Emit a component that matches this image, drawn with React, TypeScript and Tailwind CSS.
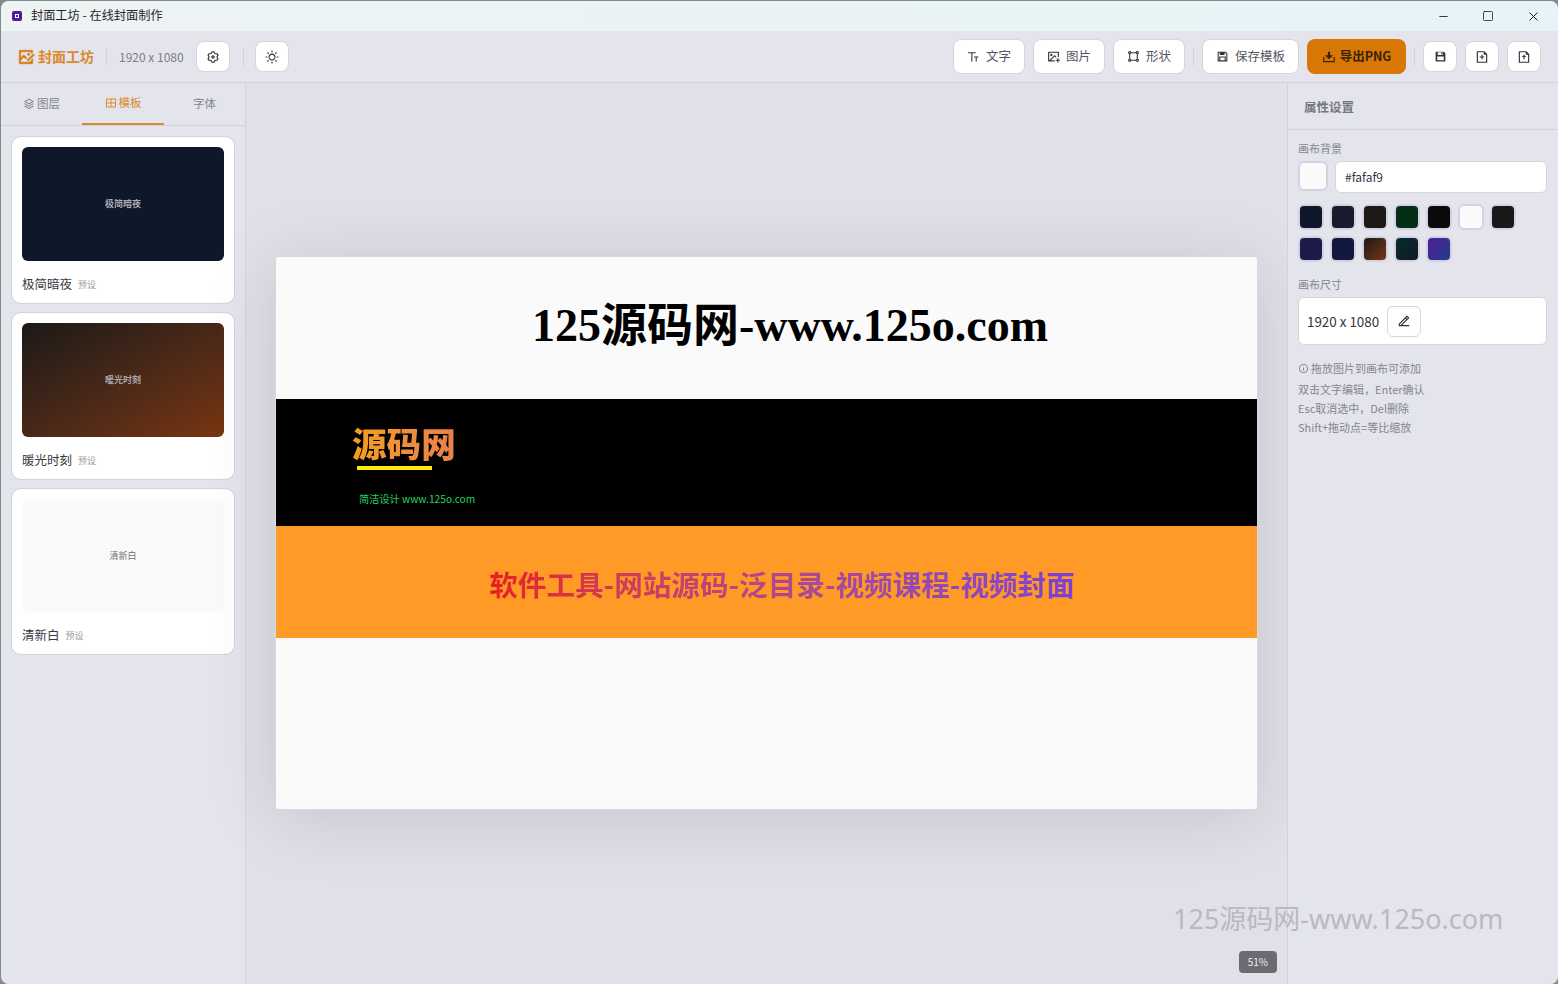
import { Minus, Square, X } from "lucide-react";
import {
  RiDownload2Fill,
  RiEdit2Line,
  RiFileAddLine,
  RiFileUploadLine,
  RiFontSize2,
  RiImageAddLine,
  RiImageEditLine,
  RiInformationLine,
  RiLayoutGridLine,
  RiSave3Fill,
  RiSave3Line,
  RiSettings3Line,
  RiShapeLine,
  RiStackLine,
  RiSunLine,
} from "react-icons/ri";
import type { ReactNode } from "react";

const SWATCHES = [
  ["bg-[#0f172a]", "bg-[#1a1a2e]", "bg-[#1c1917]", "bg-[#052e16]", "bg-[#0a0a0a]", "bg-[#fafafa]", "bg-[#18181b]"],
  [
    "bg-[#1e1b4b]",
    "bg-[#14183f]",
    "bg-gradient-to-br from-[#1c1917] to-[#78350f]",
    "bg-gradient-to-br from-[#052e2b] to-[#0f172a]",
    "bg-gradient-to-br from-[#4c1d95] to-[#1e3a8a]",
  ],
];

const TEMPLATES = [
  { name: "极简暗夜", card: "h-[168px]", thumb: "h-[114px] bg-[#0f172a]", text: "text-[#a9abb3] font-bold" },
  { name: "暖光时刻", card: "h-[168px]", thumb: "h-[114px] bg-gradient-to-br from-[#1c1917] to-[#78350f]", text: "text-[#a9a6a4] font-bold" },
  { name: "清新白", card: "h-[167px]", thumb: "h-[113px] bg-[#fafafa]", text: "text-[#6f6f6f]" },
];

function ToolButton({ icon, label, className }: { icon: ReactNode; label: string; className: string }) {
  return (
    <button className={`flex h-[35px] items-center justify-center gap-[6px] rounded-lg border border-[#d5d5de] bg-white text-[12.5px] text-[#55555f] ${className}`}>
      {icon}
      {label}
    </button>
  );
}

function IconButton({ children }: { children: ReactNode }) {
  return (
    <button className="flex h-[31px] w-[34px] items-center justify-center rounded-lg border border-[#d5d5de] bg-white text-[#33333b]">
      {children}
    </button>
  );
}

function TemplateCard({ name, card, thumb, text }: { name: string; card: string; thumb: string; text: string }) {
  return (
    <div className={`rounded-[10px] border border-[#d2d2dc] bg-white p-[10px] ${card}`}>
      <div className={`flex items-center justify-center rounded-md ${thumb}`}>
        <span className={`text-[9px] ${text}`}>{name}</span>
      </div>
      <div className="mt-[14px] flex items-center gap-[6px]">
        <span className="text-[12.5px] leading-[18px] text-[#3a3a42]">{name}</span>
        <span className="mt-[2px] text-[9px] text-[#9c9ca6]">预设</span>
      </div>
    </div>
  );
}

export default function App() {
  return (
    <div className="h-[984px] w-[1558px] overflow-hidden bg-[#7d8c8c] font-['Noto_Sans_CJK_SC','Noto_Sans',sans-serif]">
      <div className="ml-px mt-px flex h-[983px] w-[1557px] flex-col overflow-hidden rounded-t-lg rounded-b-lg bg-[#e3e3ec]">
        {/* title bar */}
        <div className="flex h-[30px] shrink-0 items-center bg-gradient-to-r from-[#eef3f3] to-[#e6f4f7]">
          <div className="ml-[11px] flex h-[10px] w-[10px] items-center justify-center rounded-[2px] bg-[#4c1d95]">
            <div className="h-1 w-1 border border-white" />
          </div>
          <span className="mb-px ml-[9px] text-[12.2px] text-[#26262b]">封面工坊 - 在线封面制作</span>
          <div className="ml-auto flex items-center gap-[32px] pr-[17px] text-[#111]">
            <Minus size={13} strokeWidth={1.5} />
            <Square size={12} strokeWidth={1.5} className="rounded-[1px]" />
            <X size={15} strokeWidth={1.5} />
          </div>
        </div>

        {/* toolbar */}
        <div className="flex h-[52px] shrink-0 items-center border-b border-[#d2d2da] bg-[#e4e4ed] pl-[16px] pr-[17px]">
          <RiImageEditLine size={18} stroke="currentColor" strokeWidth={0.7} className="text-[#d97706]" />
          <span className="mb-px ml-[3px] text-sm font-bold text-[#d98a2d]">封面工坊</span>
          <div className="mx-[12px] h-[18px] w-px bg-[#d2d2da]" />
          <span className="text-xs text-[#7c7c88]">1920 x 1080</span>
          <div className="ml-[12px]">
            <IconButton>
              <RiSettings3Line size={14} />
            </IconButton>
          </div>
          <div className="ml-[13px] mr-[11px] h-[18px] w-px bg-[#d2d2da]" />
          <IconButton>
            <RiSunLine size={14} />
          </IconButton>

          <div className="ml-auto flex items-center gap-2">
            <ToolButton icon={<RiFontSize2 size={13} className="text-[#33333b]" />} label="文字" className="w-[72px]" />
            <ToolButton icon={<RiImageAddLine size={13} className="text-[#33333b]" />} label="图片" className="w-[72px]" />
            <ToolButton icon={<RiShapeLine size={13} className="text-[#33333b]" />} label="形状" className="w-[72px]" />
            <div className="h-[18px] w-px bg-[#d2d2da]" />
            <ToolButton icon={<RiSave3Line size={13} className="text-[#33333b]" />} label="保存模板" className="w-[97px]" />
            <button className="flex h-[35px] w-[99px] items-center justify-center gap-[4px] rounded-lg bg-[#d97706] text-[12.5px] font-bold text-[#3b2206]">
              <RiDownload2Fill size={14} />
              导出PNG
            </button>
            <div className="h-[18px] w-px bg-[#d2d2da]" />
            <IconButton>
              <RiSave3Fill size={13} />
            </IconButton>
            <IconButton>
              <RiFileAddLine size={14} />
            </IconButton>
            <IconButton>
              <RiFileUploadLine size={14} />
            </IconButton>
          </div>
        </div>

        <div className="flex min-h-0 flex-1">
          {/* left panel */}
          <aside className="flex w-[245px] shrink-0 flex-col border-r border-[#d2d2da] bg-[#e4e4ed]">
            <div className="flex h-[43px] shrink-0 border-b border-[#d2d2da] text-[11.5px]">
              <div className="flex w-[81px] items-center justify-center gap-[2px] text-[#85858f]">
                <RiStackLine size={12} />
                图层
              </div>
              <div className="flex h-[42px] w-[82px] items-center justify-center gap-[2px] border-b-2 border-[#d98a2d] text-[#d98a2d]">
                <RiLayoutGridLine size={12} />
                模板
              </div>
              <div className="flex w-[81px] items-center justify-center text-[#85858f]">字体</div>
            </div>
            <div className="flex flex-col gap-2 pl-[10px] pr-[10px] pt-[10px]">
              {TEMPLATES.map((t) => (
                <TemplateCard key={t.name} {...t} />
              ))}
            </div>
          </aside>

          {/* canvas area */}
          <main className="relative flex min-w-0 flex-1 items-center justify-center bg-[#e0e0e8]">
            <div className="relative mb-px h-[552px] w-[981px] overflow-hidden rounded-[2px] bg-[#fafafa] shadow-[0_8px_70px_rgba(0,0,0,0.13)] ring-1 ring-[#d8d8de]">
              <div className="absolute left-0 right-0 top-[37px] pl-[47px] text-center font-['Liberation_Serif','Noto_Sans_CJK_SC',serif] text-[46px] font-bold leading-[64px] text-black">
                125源码网-www.125o.com
              </div>
              <div className="absolute left-0 right-0 top-[142px] h-[127px] bg-black">
                <span className="absolute left-[76px] top-[18px] bg-gradient-to-r from-[#f59e1c] to-[#e8804c] bg-clip-text text-[34.6px] font-black leading-[50px] text-transparent">
                  源码网
                </span>
                <div className="absolute left-[81px] top-[67px] h-[4px] w-[75px] bg-[#ffea00]" />
                <span className="absolute left-[83px] top-[92px] text-[10.2px] leading-[16px] text-[#22d35f]">简洁设计 www.125o.com</span>
              </div>
              <div className="absolute left-0 right-0 top-[269px] flex h-[112px] items-center justify-center bg-[#ff9a27] pl-[31px]">
                <span className="mt-[4px] bg-gradient-to-r from-[#e81c1c] to-[#7c3fd6] bg-clip-text text-[28.6px] font-bold leading-[42px] text-transparent">
                  软件工具-网站源码-泛目录-视频课程-视频封面
                </span>
              </div>
            </div>
            <div className="absolute bottom-[11px] right-[10px] rounded-[4px] bg-[#6b6b72] px-[9px] py-[3px] text-[10px] leading-[16px] text-[#eee]">51%</div>
          </main>

          {/* right panel */}
          <aside className="relative w-[271px] shrink-0 border-l border-[#d2d2da] bg-[#e4e4ed]">
            <div className="flex h-[47px] items-center border-b border-[#d2d2da] pl-[16px] pt-[2px] text-[12.5px] font-bold text-[#77777f]">属性设置</div>
            <div className="px-[10px] pt-[10px]">
              <div className="text-[11px] leading-[16px] text-[#85858f]">画布背景</div>
              <div className="mt-[5px] flex gap-[7px]">
                <div className="h-[30px] w-[30px] rounded-md border-2 border-[#d2d2e2] bg-[#fafafa]" />
                <div className="flex h-[32px] w-[212px] items-center rounded-md border border-[#d5d5de] bg-white pl-[9px] text-xs text-[#33333b]">#fafaf9</div>
              </div>
              <div className="mt-[11px] flex flex-col gap-[6px]">
                {SWATCHES.map((row, i) => (
                  <div key={i} className="flex gap-[6px]">
                    {row.map((s, j) => (
                      <div key={j} className={`h-[26px] w-[26px] rounded-md border-2 border-[#d2d2e2] ${s}`} />
                    ))}
                  </div>
                ))}
              </div>
              <div className="mt-[14px] text-[11px] leading-[16px] text-[#85858f]">画布尺寸</div>
              <div className="mt-[5px] flex h-[48px] w-[249px] items-center rounded-md border border-[#d5d5de] bg-white pl-[8px]">
                <span className="text-[13.4px] text-[#33333b]">1920 x 1080</span>
                <div className="ml-[8px] flex h-[31px] w-[34px] items-center justify-center rounded-md border border-[#d5d5de] text-[#33333b]">
                  <RiEdit2Line size={14} />
                </div>
              </div>
              <div className="mt-[14px] text-[11px] leading-[19px] text-[#85858f]">
                <div className="flex items-center gap-[2px]">
                  <RiInformationLine size={11} />
                  拖放图片到画布可添加
                </div>
                <div className="mt-[2px]">双击文字编辑，Enter确认</div>
                <div>Esc取消选中，Del删除</div>
                <div>Shift+拖动点=等比缩放</div>
              </div>
            </div>
          </aside>
        </div>
      </div>
      {/* watermark from the screen recorder */}
      <div className="absolute left-[1173px] top-[899px] whitespace-nowrap font-['Noto_Sans','Noto_Sans_CJK_SC',sans-serif] text-[27px] leading-[40px] text-[#b9b9c0]">125源码网-www.125o.com</div>
    </div>
  );
}
